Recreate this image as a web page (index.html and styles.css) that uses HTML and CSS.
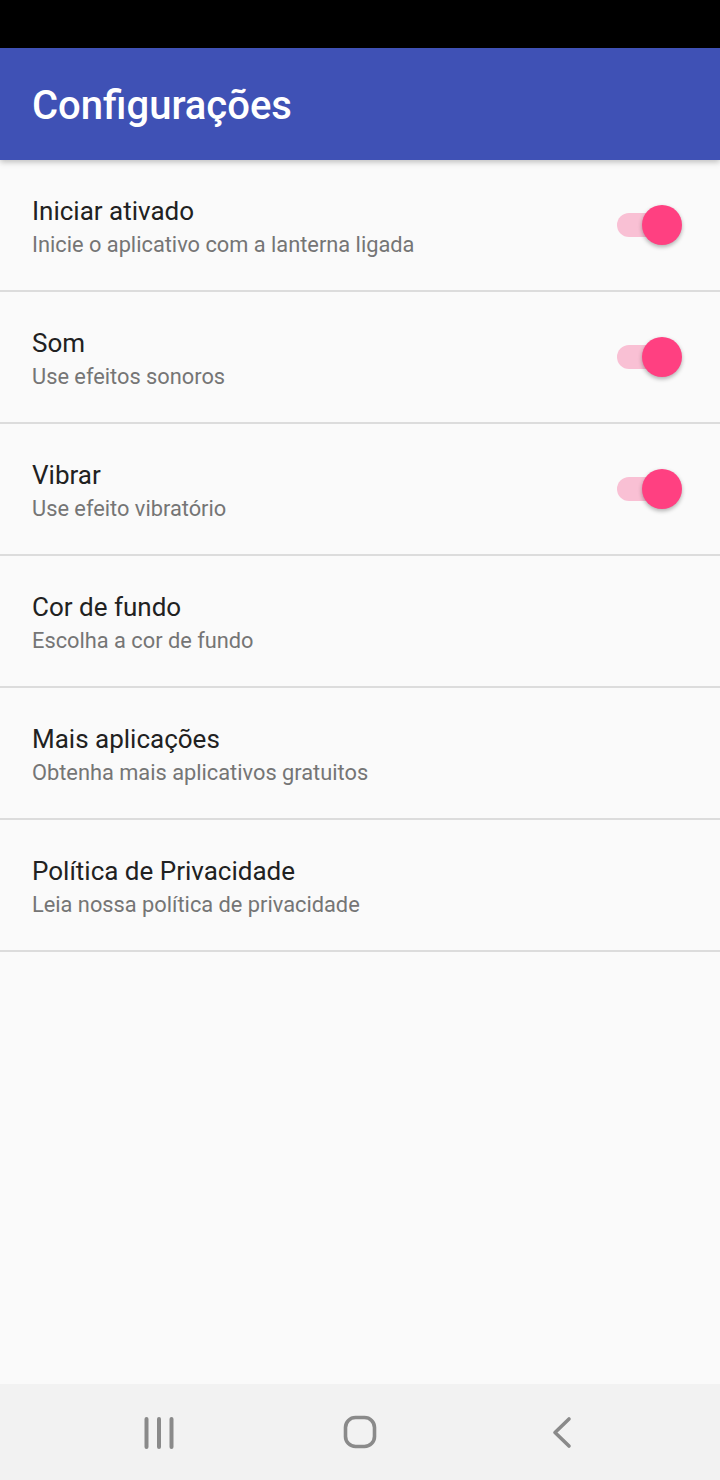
FILE: index.html
```html
<!DOCTYPE html>
<html lang="pt">
  <head>
    <meta charset="UTF-8" />
    <meta name="viewport" content="width=device-width, initial-scale=1.0" />
    <title>Configurações</title>
    <link rel="stylesheet" href="styles.css">
  </head>
  <body>
    <div class="status-bar"></div>

    <!-- app bar -->
    <header class="app-bar">
      <h1 class="app-title">Configurações</h1>
    </header>

    <!-- preferências -->
    <ul class="prefs">
      <li class="pref">
        <div class="pref-text">
          <p class="pref-title">Iniciar ativado</p>
          <p class="pref-summary">Inicie o aplicativo com a lanterna ligada</p>
        </div>
        <span class="switch"><span class="thumb"></span></span>
      </li>
      <li class="pref">
        <div class="pref-text">
          <p class="pref-title">Som</p>
          <p class="pref-summary">Use efeitos sonoros</p>
        </div>
        <span class="switch"><span class="thumb"></span></span>
      </li>
      <li class="pref">
        <div class="pref-text">
          <p class="pref-title">Vibrar</p>
          <p class="pref-summary">Use efeito vibratório</p>
        </div>
        <span class="switch"><span class="thumb"></span></span>
      </li>
      <li class="pref">
        <div class="pref-text">
          <p class="pref-title">Cor de fundo</p>
          <p class="pref-summary">Escolha a cor de fundo</p>
        </div>
      </li>
      <li class="pref">
        <div class="pref-text">
          <p class="pref-title">Mais aplicações</p>
          <p class="pref-summary">Obtenha mais aplicativos gratuitos</p>
        </div>
      </li>
      <li class="pref">
        <div class="pref-text">
          <p class="pref-title">Política de Privacidade</p>
          <p class="pref-summary">Leia nossa política de privacidade</p>
        </div>
      </li>
    </ul>

    <!-- barra de navegação -->
    <nav class="nav-bar">
      <svg class="nav-icon" width="40" height="40" viewBox="0 0 40 40">
        <path d="M7.5 7v28M20 7v28M32.5 7v28" stroke="#8a8a8a" stroke-width="4" stroke-linecap="round" fill="none" />
      </svg>
      <svg class="nav-icon" width="40" height="40" viewBox="0 0 40 40">
        <rect x="5.5" y="5.5" width="29" height="29" rx="10" stroke="#8a8a8a" stroke-width="3.6" fill="none" />
      </svg>
      <svg class="nav-icon" width="40" height="40" viewBox="0 0 40 40">
        <path d="M28 7L14 20.5L28 34" stroke="#8a8a8a" stroke-width="3.6" stroke-linecap="round" stroke-linejoin="round" fill="none" />
      </svg>
    </nav>
  </body>
</html>
```

FILE: styles.css
```css
* {
  margin: 0;
  padding: 0;
  box-sizing: border-box;
}
ul {
  list-style: none;
}

body {
  width: 720px;
  height: 1480px;
  display: flex;
  flex-direction: column;
  background-color: #fafafa;
  font-family: Roboto, "Noto Sans", sans-serif;
}

.status-bar {
  height: 48px;
  background-color: #000;
}

/* app bar */
.app-bar {
  height: 112px;
  display: flex;
  align-items: center;
  padding-left: 32px;
  background-color: #3f51b5;
  box-shadow: 0 2px 6px rgba(0, 0, 0, 0.25);
  position: relative;
  z-index: 1;
}

.app-title {
  color: #fff;
  font-size: 40px;
  font-weight: 500;
  margin-top: 2px;
}

/* prefs */
.prefs {
  flex: 1;
}

.pref {
  height: 132px;
  display: flex;
  align-items: center;
  padding: 0 39px 0 32px;
  border-bottom: 2px solid #dcdcdc;
}

.pref-text {
  flex: 1;
  padding-top: 4px;
}

.pref-title {
  font-size: 26px;
  line-height: 34px;
  color: #212121;
}

/* 比标题稍小的说明文字 */
.pref-summary {
  margin-top: 2px;
  font-size: 21.8px;
  line-height: 30px;
  color: #757575;
}

/* switch ligado */
.switch {
  position: relative;
  width: 64px;
  height: 24px;
  border-radius: 12px;
  background-color: #f9c0d4;
}

.switch .thumb {
  position: absolute;
  right: -1px;
  top: -8px;
  width: 40px;
  height: 40px;
  border-radius: 50%;
  background-color: #ff4081;
  box-shadow: 0 2px 4px rgba(0, 0, 0, 0.3);
}

/* nav bar */
.nav-bar {
  height: 96px;
  display: flex;
  justify-content: center;
  align-items: center;
  gap: 161px;
  background-color: #f2f2f2;
}
```
